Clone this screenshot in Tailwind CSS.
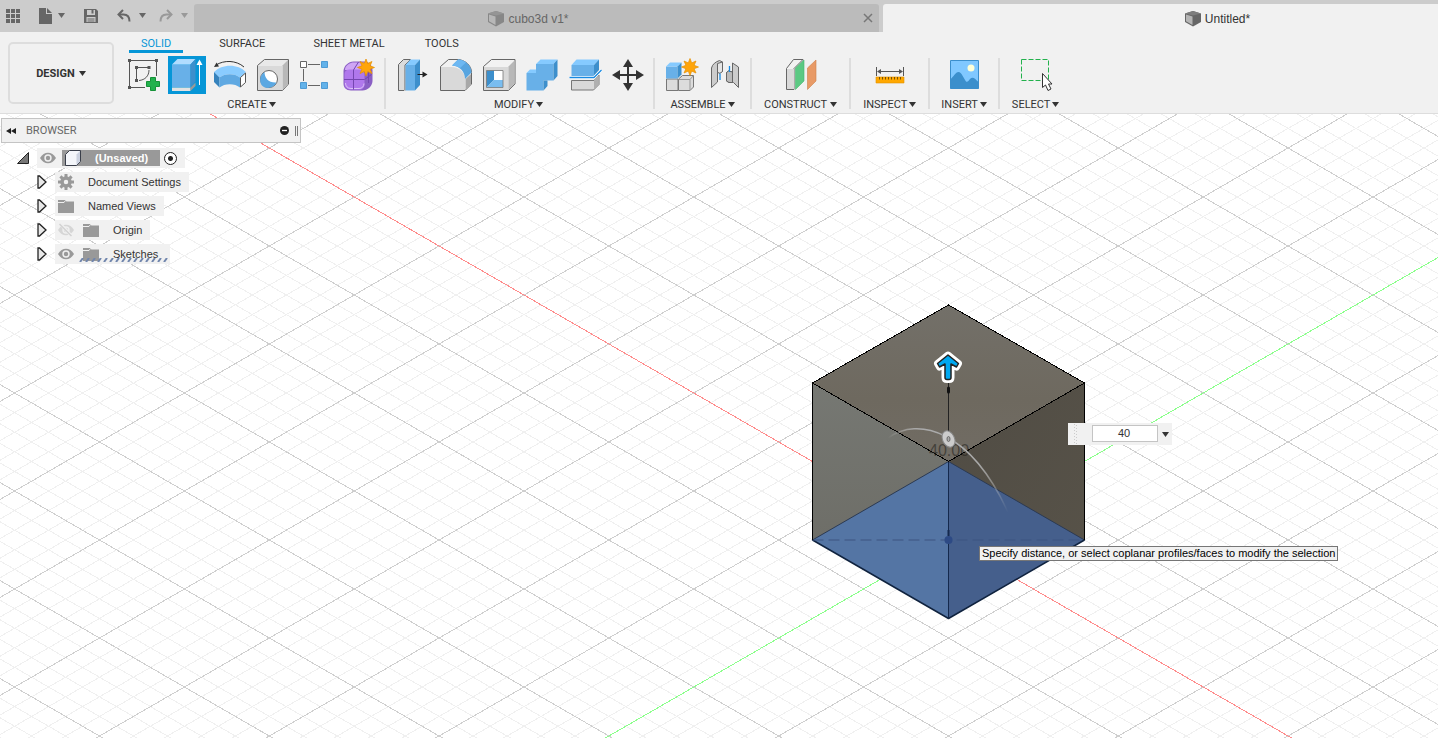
<!DOCTYPE html>
<html lang="en">
<head>
  <meta charset="UTF-8" />
  <meta name="viewport" content="width=device-width, initial-scale=1.0" />
  <title>Untitled*</title>
  <script src="https://cdn.jsdelivr.net/npm/@tailwindcss/browser@4"></script>
</head>
<body class="h-screen flex flex-col overflow-hidden bg-white font-['Liberation_Sans',Arial,sans-serif] text-[11px] text-[#333]">

  <!-- shared symbols -->
  <svg class="hidden">
    <symbol id="caret" viewBox="0 0 7 5"><path d="M0 0h7L3.500 5z" fill="currentColor" /></symbol>
    <symbol id="star" viewBox="-9 -9 18 18">
      <path d="M0-8.500l1.700 4.400 4.300-1.900-1.900 4.300 4.400 1.700-4.400 1.700 1.900 4.300-4.300-1.900L0 8.500l-1.700-4.400-4.300 1.900 1.900-4.300L-8.500 0l4.400-1.700L-6-6l4.300 1.900z" fill="#ffa50a" stroke="#e58f00" stroke-width=".7" />
    </symbol>
    <symbol id="cube" viewBox="0 0 16 16">
      <path d="M0 2.500L8 0l8 2.500V11l-8 4.500L0 11z" fill="#666" /><path d="M1 3.500L7.500 5.500v8.500L1 10.300z" fill="#b5b5b5" /><path d="M0 2.500L8 0l8 2.500-8 2z" fill="#7d7d7d" />
    </symbol>
    <symbol id="folder" viewBox="0 0 16 14">
      <path d="M0 1h7l1.500 1.500H16V14H0z" fill="#999" /><path d="M0 3.500h6l1.500-2" stroke="#f0f0f0" fill="none" />
    </symbol>
    <symbol id="eye" viewBox="0 0 16 12">
      <path d="M0 6C4-1 12-1 16 6 12 13 4 13 0 6z" fill="#999" /><circle cx="8" cy="6" r="3.700" fill="#f0f0f0" /><circle cx="8" cy="6" r="2.200" fill="#999" />
    </symbol>
    <symbol id="closed" viewBox="0 0 10 14"><path d="M1 1v12h1.500L9 7 2.500 1z" fill="#e8e8e8" stroke="#222" stroke-width="1.300" /></symbol>
  </svg>

  <header class="h-8 shrink-0 flex bg-[#ccc] overflow-hidden text-xs">
    <div class="w-[194px] shrink-0 flex items-center gap-[19px] pl-1.5 text-[#666]">
      <button aria-label="Data panel" class="shrink-0"><svg class="w-3.5 h-3.5" viewBox="0 0 14 14" fill="currentColor"><path d="M0 0h4v4H0zM5 0h4v4H5zM10 0h4v4h-4zM0 5h4v4H0zM5 5h4v4H5zM10 5h4v4h-4zM0 10h4v4H0zM5 10h4v4H5zM10 10h4v4h-4z" /></svg></button>
      <button aria-label="File" class="shrink-0 flex items-center gap-1.5">
        <svg class="w-[13px] h-4" viewBox="0 0 13 16" fill="currentColor"><path d="M0 0h7v6h6v10H0z" /><path d="M8 0l5 5H8z" /></svg>
        <svg class="w-[7px] h-[5px] mb-0.5"><use href="#caret" /></svg>
      </button>
      <button aria-label="Save" class="shrink-0"><svg class="w-3.5 h-3.5" viewBox="0 0 14 14"><path d="M0 0h12l2 2v12H0z" fill="currentColor" /><path d="M3 1h8v5H3zM2.500 8h9v5h-9z" fill="#ccc" /><path d="M7.500 1h2v3.500h-2zM3.500 9.500h7v1h-7zM3.500 11.500h7v1h-7z" fill="currentColor" /></svg></button>
      <button aria-label="Undo" class="shrink-0 flex items-center gap-2">
        <svg class="w-3.5 h-3.5" viewBox="0 0 14 14" fill="none" stroke="currentColor" stroke-width="2"><path d="M2 5.500h4.500c4 0 6 2.500 6 7" /><path d="M6 1L1.500 5.500 6 10" /></svg>
        <svg class="w-[7px] h-[5px] mb-0.5"><use href="#caret" /></svg>
      </button>
      <button aria-label="Redo" class="shrink-0 flex items-center gap-2 -ml-1.5 text-[#999]">
        <svg class="w-3.5 h-3.5" viewBox="0 0 14 14" fill="none" stroke="currentColor" stroke-width="2"><path d="M12 5.500H7.500c-4 0-6 2.500-6 7" /><path d="M8 1l4.500 4.500L8 10" /></svg>
        <svg class="w-[7px] h-[5px] mb-0.5"><use href="#caret" /></svg>
      </button>
    </div>
    <!-- the last tab runs past the window edge -->
    <div class="flex-1 flex gap-1 pt-1 -mr-[130px]">
      <div class="flex-1 flex items-center rounded-t-[3px] bg-[#bbb] text-[#666]">
        <button class="flex-1 flex items-center justify-center gap-1 pt-0.5">
          <svg class="w-4 h-4 opacity-60"><use href="#cube" /></svg>cubo3d v1*
        </button>
        <button aria-label="Close tab" class="w-4"><svg class="w-2.5 h-2.5" viewBox="0 0 10 10" stroke="#777" stroke-width="1.500"><path d="M1 1l8 8M9 1L1 9" /></svg></button>
      </div>
      <div class="flex-1 flex items-center rounded-t-[3px] bg-[#f1f1f1]">
        <button class="flex-1 flex items-center justify-center gap-1 pt-0.5 mr-4">
          <svg class="w-4 h-4"><use href="#cube" /></svg>Untitled*
        </button>
      </div>
    </div>
  </header>

  <div class="shrink-0 flex bg-[#f1f1f1] border-b border-[#ddd] font-[Roboto,sans-serif]">
    <button class="w-[106px] h-[62px] shrink-0 mt-2.5 ml-2 mr-1 pt-0.5 flex items-center justify-center gap-1 border-2 border-[#ddd] rounded-[5px] font-bold">
      DESIGN <svg class="w-[7px] h-[5px] mb-0.5"><use href="#caret" /></svg>
    </button>
    <div class="flex-1 min-w-0">
      <nav class="flex gap-6 pl-[11px] whitespace-nowrap">
        <button class="h-[21px] pt-1 px-3 border-b-[3px] border-[#0696d7] text-[#0696d7]">SOLID</button>
        <button class="h-[21px] pt-1 px-3 border-b-[3px] border-transparent">SURFACE</button>
        <button class="h-[21px] pt-1 px-3 border-b-[3px] border-transparent">SHEET METAL</button>
        <button class="h-[21px] pt-1 px-1 border-b-[3px] border-transparent">TOOLS</button>
      </nav>

      <div class="flex mt-[3px] whitespace-nowrap">
        <section class="shrink-0 pl-[7px] pr-1.5">
          <div class="flex gap-[5px] h-[38px]">
            <button aria-label="Create sketch" class="w-[38px]"><svg viewBox="0 0 38 38" fill="none" stroke="#555"><path d="M6 4.500h24M4.500 6v24M31.500 6v14M6 31.500h14M13 11.500h10M11.500 13v10M24 14c0 6-4 10-10 10.500" /><path d="M3 3h3v3H3zM30 3h3v3h-3zM3 30h3v3H3zM10 10h3v3h-3zM22.500 10h3v3h-3zM10 23h3v3h-3z" fill="#555" stroke="none" /><path d="M25.500 21.500h5v4h4v5h-4v4h-5v-4h-4v-5h4z" fill="#22b14c" stroke="#159238" /></svg></button>
            <button aria-label="Extrude" class="w-[38px] bg-[#0696d7]"><svg viewBox="0 0 38 38"><path d="M4 8.500h18.500V31H4z" fill="#68b0e8" /><path d="M4 8.500L9.500 3h18l-5 5.500z" fill="#b0dcff" /><path d="M22.500 8.500l5-5.500v22.500l-5 5.500z" fill="#3d8fcc" /><path d="M4 31.500h18.500V35H4z" fill="#e2e2e2" /><path d="M22.500 31.500l5-5v3.500l-5 5z" fill="#999" /><path d="M31.500 29V6" stroke="#fff" /><path d="M28.500 9l3-5.500 3 5.500z" fill="#fff" /></svg></button>
            <button aria-label="Revolve" class="w-[38px]"><svg viewBox="0 0 38 38"><path d="M5 9c8-5 20-5 28 2" fill="none" stroke="#333" /><path d="M3 11l2.500-4.500L8 10.500z" fill="#333" /><path d="M3 16c8-8.500 24-8.500 32 0l-6 5.500c-5-4.500-15.500-4.500-20.500 0z" fill="#8accff" /><path d="M3 16l5.500 5.500v10L3 26z" fill="#3683bd" /><path d="M8.500 21.500c5-4.500 15.500-4.500 20.500 0v10c-5-4.500-15.500-4.500-20.500 0z" fill="#60a9e2" /><path d="M29.500 21.500l5-4.500v9.500l-5 4.500z" fill="#fff" stroke="#555" /></svg></button>
            <button aria-label="Hole" class="w-[38px]"><svg viewBox="0 0 38 38" stroke="#666" stroke-linejoin="round"><path d="M3.500 9.500l7-6h24v24.500l-6 6.500h-25z" fill="#e9e9e9" /><path d="M28.500 9.500l5.500-5.500v24l-5.500 6z" fill="#b8b8b8" stroke="none" /><path d="M4 10h24.500v24H4z" fill="#d9d9d9" stroke="none" /><circle cx="15" cy="23" r="8.500" fill="#fff" /><path d="M10.500 16c0 6 4 11 12 10.500-3 6.500-11.500 7-15 2.500-2.500-4.500-1.500-10 3-13z" fill="#5ba8e2" stroke="none" /></svg></button>
            <button aria-label="Pattern" class="w-[38px]"><svg viewBox="0 0 38 38" stroke="#666"><path d="M11 8.500h12M6.500 13v12M11 29.500h12" /><path d="M3.500 5.500h6v6h-6z" fill="#fff" /><path d="M24.500 5.500h6v6h-6zM3.500 26.500h6v6h-6zM24.500 26.500h6v6h-6z" fill="#62b2ea" stroke="#4f9bd4" /></svg></button>
            <button aria-label="Create form" class="w-[38px]"><svg viewBox="0 0 38 38"><path d="M3.500 15c0-5 5-9.500 10-9.500h10c6 0 9 5 9 9V25c0 5-5 9.500-10 9.500H11c-5 0-7.500-3-7.500-7z" fill="#8a5fc4" /><path d="M5 13c1-4 5-6.500 9-6.500h9c3 0 5 1.500 6 3.500-3 0-6 2-7 4H5z" fill="#cfa6f5" /><path d="M4.500 18c0-3 2-4.500 5-4.500h9c4 0 6 2 6 5V28c0 4-2 5.500-5 5.500h-8c-5 0-7-2-7-6z" fill="#b078ec" /><path d="M5.500 27c0 3 2 5.500 5.500 5.500h8c3 0 5-2 5-5" fill="none" stroke="#dcc0f8" /><path d="M13.500 14v19.500M4 23.500h20.500l7-5M13.500 14l5-8M28.500 11v16" fill="none" stroke="#7546b0" /><use href="#star" x="17" y="2.500" width="18" height="18" /></svg></button>
          </div>
          <button class="w-full h-[19px] pt-1 flex items-center justify-center gap-0.5">CREATE <svg class="w-[7px] h-[5px] mb-0.5"><use href="#caret" /></svg></button>
        </section>
        <div class="w-0.5 shrink-0 mt-0.5 mb-1 bg-[#ddd]"></div>
        <section class="shrink-0 px-[7px]">
          <div class="flex gap-[5px] h-[38px]">
            <button aria-label="Press pull" class="w-[38px]"><svg viewBox="0 0 38 38"><path d="M11 34.500H5.500V8.500l5-5h7l-5.500 5.500v25.500" fill="#dcdcdc" stroke="#666" /><path d="M12.500 9H22v25.500h-9.500z" fill="#68b0e8" /><path d="M12.500 9l5-5.500H27L22 9z" fill="#85caff" /><path d="M22 9l5-5.500V29l-5 5.500z" fill="#3d8fcc" /><path d="M24.500 18.500H31" stroke="#222" /><path d="M29.500 15.500l5 3-5 3z" fill="#222" /></svg></button>
            <button aria-label="Fillet" class="w-[38px]"><svg viewBox="0 0 38 38"><path d="M4.500 10.500l8-7h10c7 1 13 6 13 13V28l-6.500 6.500H4.500z" fill="#f2f2f2" stroke="#666" /><path d="M5 11h10.500c8 0 13.500 6 13.500 12v11H5z" fill="#d9d9d9" /><path d="M29.500 23l5.500-5v10l-5.500 6z" fill="#a8a8a8" /><path d="M22 3.500c7 0 13.500 6 13.500 13L29 23c0-7-5-13-13-13.500z" fill="#58a5e0" /><path d="M22 3.500c3 0 5.500 1 8 3L24 12c-2-1.500-5-2.500-8-2.500z" fill="#6db8f2" /></svg></button>
            <button aria-label="Shell" class="w-[38px]"><svg viewBox="0 0 38 38"><path d="M4.500 10.500l8-7H36V28l-6.500 6.500h-25z" fill="#f2f2f2" stroke="#666" /><path d="M5 11h24.500v23H5z" fill="#d9d9d9" /><path d="M29.500 10.500l6-6V28l-6 6z" fill="#b8b8b8" /><path d="M7.500 14.500H24v17H7.500z" fill="#fff" /><path d="M7.500 14.500H15V24l-7.500 7.500z" fill="#3d8fcc" /><path d="M7.500 31.500L15 24h9v7.500z" fill="#79bdf0" /><path d="M7.500 14.500H24v17H7.500z" fill="none" stroke="#777" stroke-width=".8" /></svg></button>
            <button aria-label="Combine" class="w-[38px]"><svg viewBox="0 0 38 38"><path d="M4.500 17H14V8h17.500v16.500h-10v10h-17z" fill="#68b0e8" /><path d="M14 8l4.500-4.500h17L31.500 8zM4.500 17L8 13.500h6V17z" fill="#85caff" /><path d="M31.500 8l4-4.500V20l-4 4.500zM21.500 24.500h4V30l-4 4.500z" fill="#3d8fcc" /></svg></button>
            <button aria-label="Split body" class="w-[38px]"><svg viewBox="0 0 38 38"><path d="M6.500 24.500H29l5-5.500v9.500L28.500 34h-22z" fill="#d9d9d9" stroke="#777" /><path d="M29 24l4.500-4.500v9L29 33.500z" fill="#b0b0b0" /><path d="M6.500 9H29v11H6.500z" fill="#68b0e8" /><path d="M6.500 9l5-5.500H34L29 9z" fill="#85caff" /><path d="M29 9l5-5.500v10.500l-5 6z" fill="#3d8fcc" /><path d="M4.500 21.500H29l7.500-7.500" fill="none" stroke="#fff" stroke-width="3" /><path d="M4.500 21.500H29l7.500-7.500" fill="none" stroke="#188ae2" stroke-width="1.300" /></svg></button>
            <button aria-label="Move" class="w-[38px]"><svg viewBox="0 0 38 38" fill="#333"><path d="M19 9h2v9h9v2h-9v9h-2v-9h-9v-2h9z" /><path d="M20 3l5 8H15zM20 35l5-8H15zM4 19l8-5v10zM36 19l-8-5v10z" /></svg></button>
          </div>
          <button class="w-full h-[19px] pt-1 pr-0.5 flex items-center justify-center gap-0.5">MODIFY <svg class="w-[7px] h-[5px] mb-0.5"><use href="#caret" /></svg></button>
        </section>
        <div class="w-0.5 shrink-0 mt-0.5 mb-1 bg-[#ddd]"></div>
        <section class="shrink-0 px-[7px]">
          <div class="flex gap-[5px] h-[38px]">
            <button aria-label="New component" class="w-[38px]"><svg viewBox="0 0 38 38"><path d="M4.500 23h11.500v11.500H4.500zM16.500 23l4-3.500h11V31L28 34.500H16.500z" fill="#dcdcdc" stroke="#777" /><path d="M16.500 23.500H28l3.500-4M28 23.500v11" fill="none" stroke="#999" /><path d="M4 10.500h11.500V22.500H4z" fill="#68b0e8" /><path d="M4 10.500L8 6.500h11.500l-4 4z" fill="#85caff" /><path d="M15.500 10.500l4-4v12l-4 4z" fill="#3d8fcc" /><use href="#star" x="19" y="2" width="18" height="18" /></svg></button>
            <button aria-label="Joint" class="w-[38px]"><svg viewBox="0 0 38 38" stroke="#666" stroke-linejoin="round"><path d="M6.500 31.500V12c1-4 4-6 8-7.500l3 1.500v9.500l-3 1.500-2-1v10z" fill="#ccc" /><path d="M12.500 7.500v9l2.500.8 2.500-1.800V6z" fill="#e6e6e6" /><path d="M21.500 16.500l2-1.500 4 1V7l6 4v20.500l-5-5H24L21.500 25z" fill="#ccc" /><path d="M21.500 16.500l2-1.500 4 1v10.500H24L21.500 25z" fill="#bbb" /><path d="M15 17.500V24M24.500 10v6" stroke="#188ae2" stroke-width="1.300" /></svg></button>
          </div>
          <button class="w-full h-[19px] pt-1 flex items-center justify-center gap-0.5">ASSEMBLE <svg class="w-[7px] h-[5px] mb-0.5"><use href="#caret" /></svg></button>
        </section>
        <div class="w-0.5 shrink-0 mt-0.5 mb-1 bg-[#ddd]"></div>
        <section class="shrink-0 px-3">
          <button aria-label="Construct plane" class="block mx-auto w-[38px] h-[38px]"><svg viewBox="0 0 38 38"><path d="M4.500 12.500l7-9H21L12 12.500v21H4.500z" fill="#f2f2f2" stroke="#666" /><path d="M5 13h7v20H5z" fill="#d9d9d9" /><path d="M13.500 12L22 4v21l-8.500 8.500z" fill="#5bc983" stroke="#45b56d" stroke-width=".6" /><path d="M25.500 12L34 4v21l-8.500 8.500z" fill="#e89a66" stroke="#cf7f4a" stroke-width=".6" /></svg></button>
          <button class="w-full h-[19px] pt-1 flex items-center justify-center gap-[3px]">CONSTRUCT <svg class="w-[7px] h-[5px] mb-0.5"><use href="#caret" /></svg></button>
        </section>
        <div class="w-0.5 shrink-0 mt-0.5 mb-1 bg-[#ddd]"></div>
        <section class="shrink-0 px-3">
          <button aria-label="Measure" class="block mx-auto w-[38px] h-[38px]"><svg viewBox="0 0 38 38"><path d="M5.500 11v9M32.500 11v9M7 15.500h24" stroke="#555" /><path d="M6 15.500l4-2.500v5zM32 15.500L28 13v5z" fill="#555" /><path d="M5 21h28v6H5z" fill="#ffa800" stroke="#e09000" stroke-width=".6" /><path d="M8.500 21v2.500M11.500 21v2.500M14.500 21v2.500M17.500 21v2.500M20.500 21v2.500M23.500 21v2.500M26.500 21v2.500M29.500 21v2.500" stroke="#7a5200" /></svg></button>
          <button class="w-full h-[19px] pt-1 flex items-center justify-center gap-0.5">INSPECT <svg class="w-[7px] h-[5px] mb-0.5"><use href="#caret" /></svg></button>
        </section>
        <div class="w-0.5 shrink-0 mt-0.5 mb-1 bg-[#ddd]"></div>
        <section class="shrink-0 px-[11px]">
          <button aria-label="Insert image" class="block mx-auto w-[38px] h-[38px]"><svg viewBox="0 0 38 38"><path d="M5.500 4.500h28v28h-28z" fill="#80c8ff" /><path d="M5.500 23c3-2 5-7 8-7s5 6 7.500 9.500c1.500 1 2.500-.5 4-2.500 3-3 5 0 8.500 3v6.500h-28z" fill="#3b8fcc" /><circle cx="26" cy="12" r="3.500" fill="#ffffd8" /><path d="M5.500 4.500h28v28h-28z" fill="none" stroke="#3b8fcc" /></svg></button>
          <button class="w-full h-[19px] pt-1 flex items-center justify-center gap-0.5">INSERT <svg class="w-[7px] h-[5px] mb-0.5"><use href="#caret" /></svg></button>
        </section>
        <div class="w-0.5 shrink-0 mt-0.5 mb-1 bg-[#ddd]"></div>
        <section class="shrink-0 px-3">
          <button aria-label="Select" class="block mx-auto w-[38px] h-[38px]"><svg viewBox="0 0 38 38"><path d="M4.500 3.500h27v21h-27z" fill="none" stroke="#22b14c" stroke-dasharray="5 2" /><path d="M25.500 17.500v14l3-2.500 2.500 5.500 3-1.500-2.500-5H35z" fill="#fff" stroke="#333" /></svg></button>
          <button class="w-full h-[19px] pt-1 flex items-center justify-center gap-0.5">SELECT <svg class="w-[7px] h-[5px] mb-0.5"><use href="#caret" /></svg></button>
        </section>
      </div>
    </div>
  </div>

  <main class="relative flex-1 min-h-0 overflow-hidden">
    <svg class="absolute inset-0 w-full h-full">
      <defs>
        <linearGradient id="topFace" x1="0" y1="0" x2="0" y2="1"><stop offset="0" stop-color="#737069" /><stop offset=".6" stop-color="#6e695f" /><stop offset="1" stop-color="#716c64" /></linearGradient>
        <linearGradient id="leftFace" x1="0" y1="0" x2="0" y2="1"><stop offset="0" stop-color="#767873" /><stop offset="1" stop-color="#6a6962" /></linearGradient>
        <linearGradient id="rightFace" x1="0" y1="0" x2="1" y2="1"><stop offset="0" stop-color="#504c44" /><stop offset="1" stop-color="#585349" /></linearGradient>
        <linearGradient id="arcFade" x1="0" y1="0" x2="1" y2="0"><stop offset="0" stop-color="#ccc" stop-opacity="0" /><stop offset=".25" stop-color="#aaa" /><stop offset=".75" stop-color="#aaa" /><stop offset="1" stop-color="#ccc" stop-opacity="0" /></linearGradient>
      </defs>
      <g fill="none" shape-rendering="crispEdges">
        <path id="minor" stroke="#f0f0f0" />
        <path id="major" stroke="#cfcfcf" />
        <path id="xAxis" stroke="#ff8c8c" />
        <path id="yAxis" stroke="#8cff8c" />
      </g>
      <!-- extruded body -->
      <g stroke-linejoin="round">
        <path d="M948.500 191L1084.500 269 948.500 347.500 812.500 269z" fill="url(#topFace)" />
        <path d="M812.500 269L948.500 347.500V504.500L812.500 426z" fill="url(#leftFace)" />
        <path d="M1084.500 269L948.500 347.500V504.500L1084.500 426z" fill="url(#rightFace)" />
        <path d="M948.500 347.500V504.500L812.500 426z" fill="#5475a4" />
        <path d="M948.500 347.500V504.500L1084.500 426z" fill="#455f8c" />
        <path d="M812.500 426L948.500 347.500 1084.500 426" fill="none" stroke="#2c3a52" />
        <path d="M812.500 426L948.500 504.500 1084.500 426" fill="none" stroke="#10233f" stroke-width="1.500" />
        <path d="M812.500 426h272" stroke="#3d5580" stroke-dasharray="11 5" />
        <path d="M948.500 347.500v157" stroke="#14294d" />
        <path d="M948.500 191L1084.500 269 948.500 347.500 812.500 269zM812.500 269v157M1084.500 269v157" fill="none" stroke="#000" shape-rendering="crispEdges" />
      </g>
      <circle cx="948.500" cy="426" r="4" fill="#2d4a85" />
      <path d="M948.500 416v6" stroke="#14294d" stroke-width="2" />
      <!-- distance and taper manipulators -->
      <text x="929" y="342" font-size="16" fill="#26241f" fill-opacity=".6">40.00</text>
      <path d="M948.500 268v54" stroke="#222" />
      <path d="M948.500 274v4" stroke="#111" stroke-width="3" stroke-linecap="round" />
      <path d="M888 324C918 302 970 316 1008 398" fill="none" stroke="url(#arcFade)" stroke-width="1.500" />
      <ellipse cx="948.500" cy="325" rx="6" ry="8.500" transform="rotate(-25 948.500 325)" fill="#ccc" stroke="#888" />
      <ellipse cx="948.500" cy="325" rx="1.500" ry="2.500" fill="#aaa" stroke="#666" />
      <path d="M948 241l-10.500 8.500 2 3.500 5.500-3v13.500q0 2 2 2h2q2 0 2-2v-13.500l5.500 3 2-3.500z" fill="#00a8f0" stroke="#fff" stroke-width="7" stroke-linejoin="round" />
      <path d="M948 241l-10.500 8.500 2 3.500 5.500-3v13.500q0 2 2 2h2q2 0 2-2v-13.500l5.500 3 2-3.500z" fill="#00a8f0" stroke="#222" stroke-width="1.500" stroke-linejoin="round" />
    </svg>

    <aside class="absolute left-px top-1 w-[300px]">
      <div class="h-[25px] flex items-center pl-1 pr-0.5 bg-[#f1f1f1] border border-[#c4c4c4]">
        <button aria-label="Collapse"><svg class="w-2.5 h-2" viewBox="0 0 10 8" fill="#222"><path d="M5 1v6L0 4zM10 1v6L5 4z" /></svg></button>
        <h2 class="flex-1 ml-2.5 pt-px font-[Roboto,sans-serif] text-[#666]">BROWSER</h2>
        <button aria-label="Minimize" class="mr-1.5"><svg class="w-[9px] h-[9px]" viewBox="0 0 9 9"><circle cx="4.500" cy="4.500" r="4.500" fill="#222" /><path d="M2 4.500h5" stroke="#fff" stroke-width="1.300" /></svg></button>
        <div class="w-[3px] h-2.5 border-x border-[#777]"></div>
      </div>
      <ul class="mt-[5px] flex flex-col gap-1">
        <li class="flex items-center h-5 pl-4">
          <button aria-label="Collapse document" class="w-3 mr-2"><svg class="w-3 h-3" viewBox="0 0 12 12"><path d="M11.500.5v11H.5z" fill="#777" stroke="#222" /></svg></button>
          <div class="h-5 flex items-center bg-[#f1f1f1] pl-[3px] pr-2">
            <svg class="w-4 h-3 mr-1.5"><use href="#eye" /></svg>
            <button class="h-4 flex items-center gap-3.5 pl-[3px] pr-3 bg-[#999] text-white font-bold">
              <svg class="w-4 h-4" viewBox="0 0 16 16" stroke="#3a3f4a" stroke-linejoin="round"><path d="M.5 4.500l4-4h11v11l-4 4H.5z" fill="#f4f6fa" /><path d="M11.500 4.500l3.500-3.500v10.500l-3.500 3.500z" fill="#ccd2e0" stroke="none" /></svg>(Unsaved)
            </button>
            <input type="radio" checked aria-label="Activate component" class="appearance-none w-[13px] h-[13px] ml-1 rounded-full border border-[#222] bg-[radial-gradient(circle,#222_2px,#fff_3px)]" />
          </div>
        </li>
        <li class="flex items-center h-5 pl-9">
          <button aria-label="Expand Document Settings" class="w-2.5 mr-2"><svg class="w-2.5 h-3.5"><use href="#closed" /></svg></button>
          <div class="h-5 flex items-center gap-3.5 bg-[#f1f1f1] pl-[3px] pr-2">
            <svg class="w-4 h-4" viewBox="-8 -8 16 16" stroke="#999"><circle r="4" fill="none" stroke-width="3.500" /><path d="M0-8v3M0 8V5M-8 0h3M8 0H5M-5.600-5.600l2 2M5.600 5.600l-2-2M-5.600 5.600l2-2M5.600-5.600l-2 2" stroke-width="3" /></svg>Document Settings
          </div>
        </li>
        <li class="flex items-center h-5 pl-9">
          <button aria-label="Expand Named Views" class="w-2.5 mr-2"><svg class="w-2.5 h-3.5"><use href="#closed" /></svg></button>
          <div class="h-5 flex items-center gap-3.5 bg-[#f1f1f1] pl-[3px] pr-2">
            <svg class="w-4 h-3.5"><use href="#folder" /></svg>Named Views
          </div>
        </li>
        <li class="flex items-center h-5 pl-9">
          <button aria-label="Expand Origin" class="w-2.5 mr-2"><svg class="w-2.5 h-3.5"><use href="#closed" /></svg></button>
          <div class="h-5 flex items-center bg-[#f1f1f1] pl-[3px] pr-2">
            <svg class="w-4 h-3.5 mr-[9px]" viewBox="0 0 16 14"><use href="#eye" y="1" width="16" height="12" opacity=".3" /><path d="M1.500 0l13 14" stroke="#f1f1f1" stroke-width="3" /><path d="M1.500 1l12 12" stroke="#d2d2d2" stroke-width="1.500" /></svg>
            <svg class="w-4 h-3.5 mr-3.5"><use href="#folder" /></svg>Origin
          </div>
        </li>
        <li class="flex items-center h-5 pl-9">
          <button aria-label="Expand Sketches" class="w-2.5 mr-2"><svg class="w-2.5 h-3.5"><use href="#closed" /></svg></button>
          <div class="relative h-5 flex items-center bg-[#f1f1f1] pl-[3px] pr-3">
            <svg class="w-4 h-3 mr-[9px]"><use href="#eye" /></svg>
            <svg class="w-4 h-3.5 mr-3.5"><use href="#folder" /></svg>Sketches
            <svg class="absolute left-6 bottom-0.5 w-[89px] h-1" viewBox="0 0 89 4"><path id="hatch" stroke="#7186ad" stroke-width="2" /></svg>
          </div>
        </li>
      </ul>
    </aside>

    <div class="absolute left-[1068px] top-[309px] h-[22px] flex items-center bg-[#f1f1f1] pl-1.5 pr-[3px]">
      <svg class="w-[3px] h-5 mr-[15px]" viewBox="0 0 3 20"><path d="M.5 0v20M2.500 1v19" stroke="#ccc" stroke-dasharray="1 2" /></svg>
      <input type="text" aria-label="Distance" value="40" class="w-[66px] h-[17px] pr-0.5 pb-0.5 mb-px bg-white border border-[#c4c4c4] text-center text-[11px]" />
      <button aria-label="Distance options" class="ml-1 w-[7px]"><svg class="w-[7px] h-[5px]"><use href="#caret" /></svg></button>
    </div>
    <div role="tooltip" class="absolute left-[979px] top-[432px] h-[15px] px-0.5 leading-[13px] whitespace-nowrap bg-[#f1f1f1] border border-[#767676] text-black">Specify distance, or select coplanar profiles/faces to modify the selection</div>
  </main>

  <script>
    // isometric ground grid around the sketch origin
    const ox = 948.5, oy = 426;
    const stepX = 169.8, slope = 98 / 169.8;
    const reach = 3000;

    function lineAt(x, s) {
      return `M${x - reach} ${oy - s * reach}L${x + reach} ${oy + s * reach}`;
    }

    let minor = '', major = '';
    for (let i = -90; i <= 90; i++) {
      const x = ox + i * stepX / 5;
      const d = lineAt(x, slope) + lineAt(x, -slope);
      if (i % 5 === 0) major += d;
      else minor += d;
    }
    document.getElementById('minor').setAttribute('d', minor);
    document.getElementById('major').setAttribute('d', major);
    document.getElementById('xAxis').setAttribute('d', lineAt(ox, slope));
    document.getElementById('yAxis').setAttribute('d', lineAt(ox, -slope));

    let hatch = '';
    for (let x = 1; x < 86; x += 6) hatch += `M${x} 4l3-4`;
    document.getElementById('hatch').setAttribute('d', hatch);
  </script>
</body>
</html>
